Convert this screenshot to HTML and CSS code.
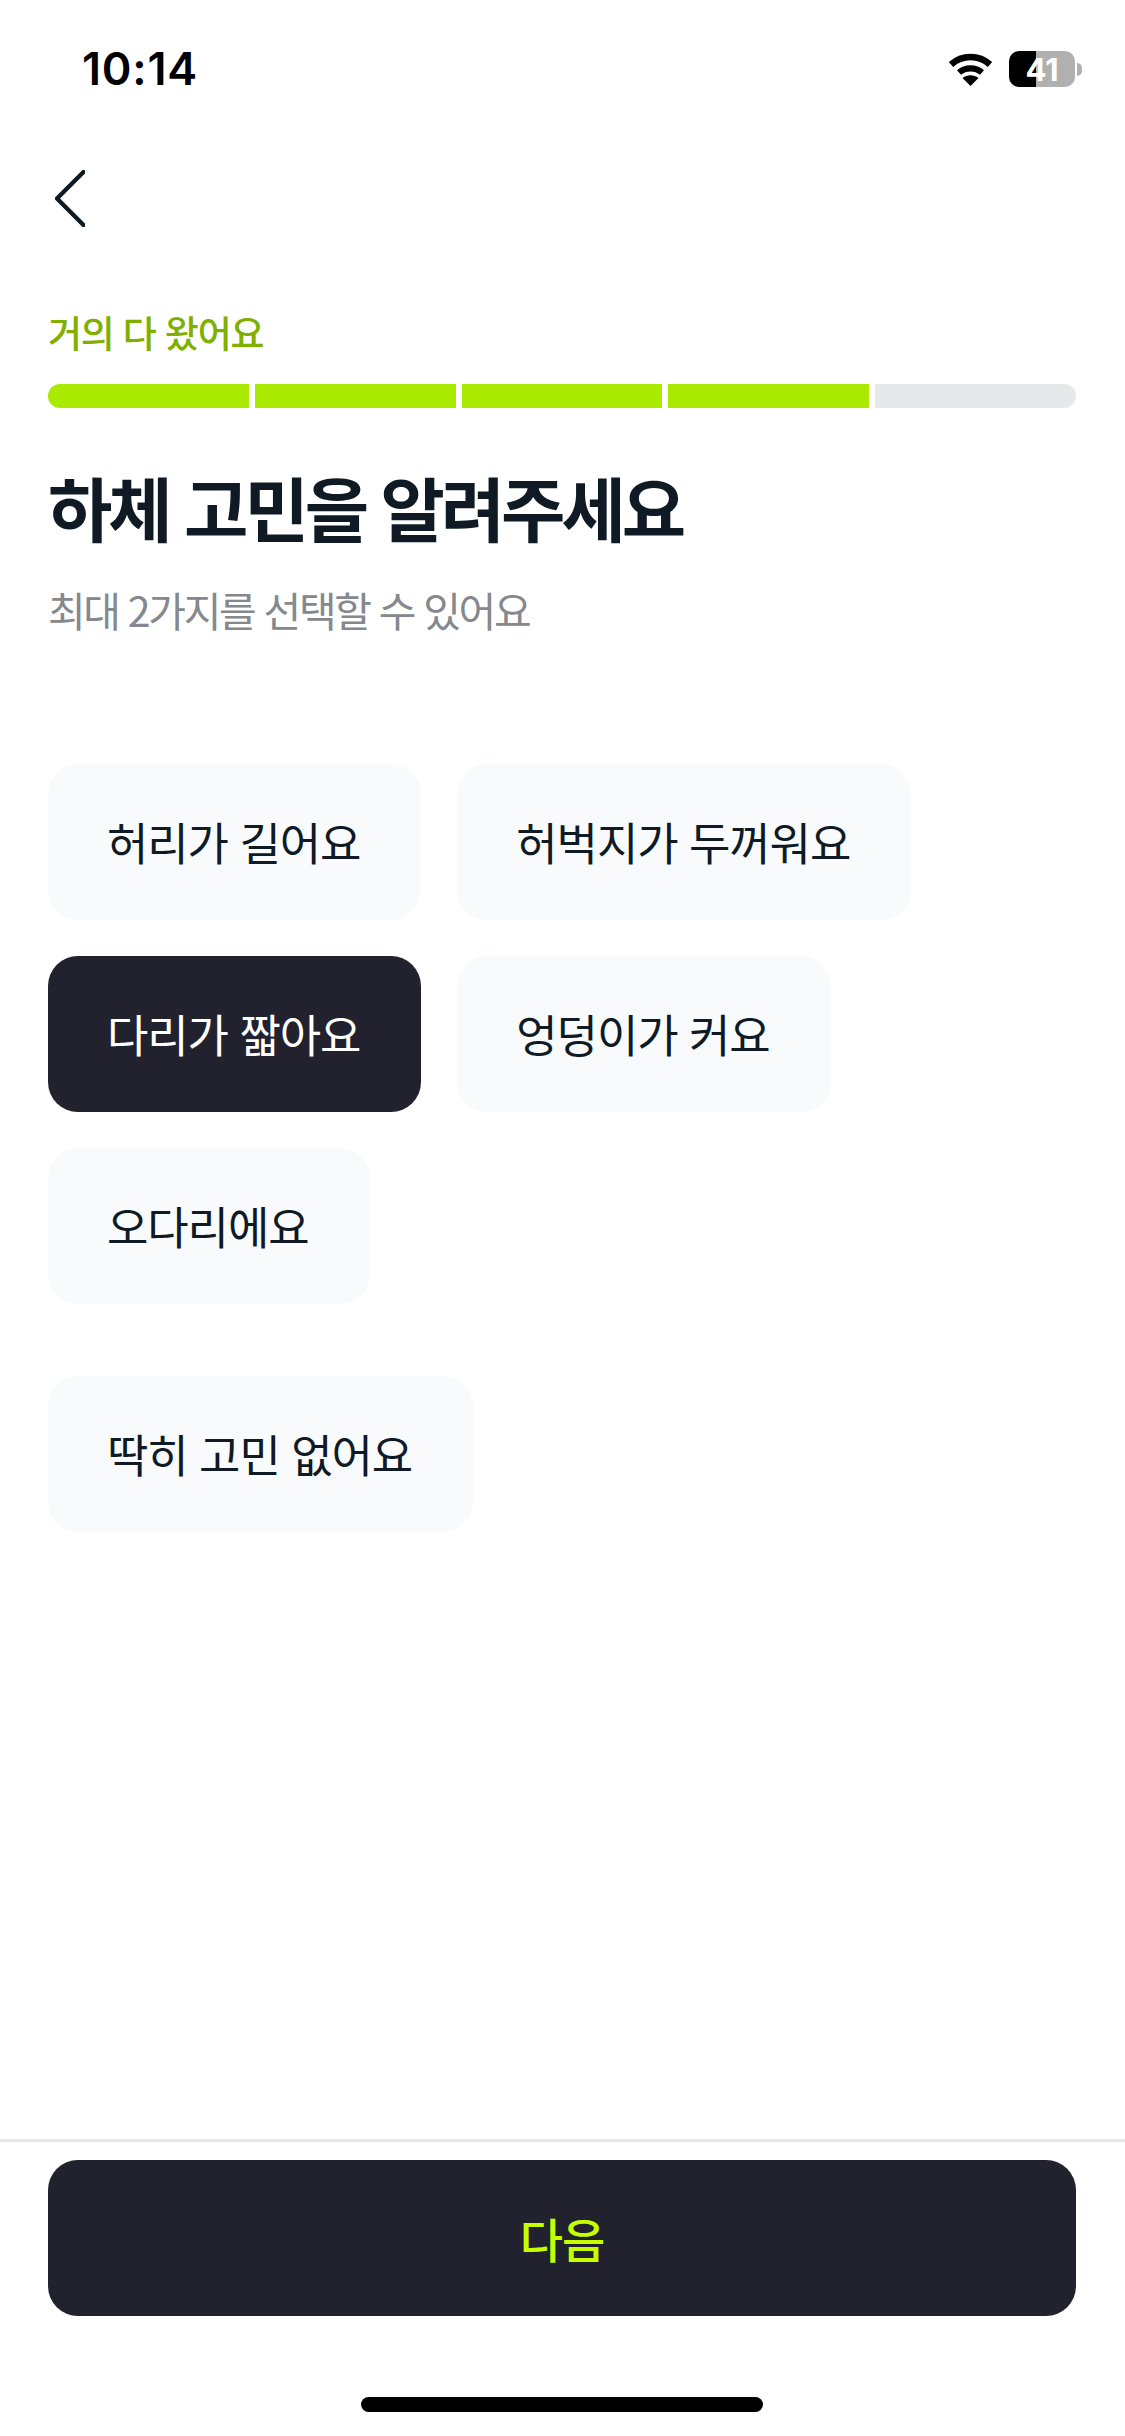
FILE: index.html
```html
<!DOCTYPE html>
<html lang="ko">
<head>
<meta charset="utf-8">
<title>하체 고민</title>
<link rel="stylesheet" href="styles.css">
</head>
<body>
<div class="screen">
  <header class="status">
    <span class="time">10:14</span>
    <div class="status-icons">
      <svg class="wifi" viewBox="0 0 45 33" width="45" height="33" aria-hidden="true">
        <path d="M3 11.5C14 1.5 31 1.5 42 11.5" fill="none" stroke="#000" stroke-width="6.6"/>
        <path d="M11 19.5C17.5 14 27.5 14 34 19.5" fill="none" stroke="#000" stroke-width="6.2"/>
        <path d="M22.5 33L14.5 25C19 21.2 26 21.2 30.5 25Z" fill="#000"/>
      </svg>
      <div class="battery-wrap">
        <div class="battery">41</div>
        <div class="battery-nub"></div>
      </div>
    </div>
  </header>
  <nav class="nav">
    <svg class="back" viewBox="0 0 30 57" width="30" height="57" aria-hidden="true">
      <path d="M28.5 2L2 28.5L28.5 55" fill="none" stroke="#0f1a24" stroke-width="4.4" stroke-linecap="round" stroke-linejoin="round"/>
    </svg>
  </nav>
  <main class="content">
    <p class="step">거의 다 왔어요</p>
    <div class="progress">
      <span class="seg on first"></span>
      <span class="seg on"></span>
      <span class="seg on"></span>
      <span class="seg on"></span>
      <span class="seg last"></span>
    </div>
    <h1 class="title">하체 고민을 알려주세요</h1>
    <p class="sub">최대 2가지를 선택할 수 있어요</p>
    <div class="chips">
      <button class="chip">허리가 길어요</button>
      <button class="chip">허벅지가 두꺼워요</button>
      <button class="chip selected">다리가 짧아요</button>
      <button class="chip">엉덩이가 커요</button>
      <button class="chip">오다리에요</button>
    </div>
    <div class="chips extra">
      <button class="chip">딱히 고민 없어요</button>
    </div>
  </main>
  <footer class="footer">
    <button class="next">다음</button>
    <div class="home"></div>
  </footer>
</div>
</body>
</html>
```
FILE: styles.css
```css
* { box-sizing: border-box; }
html, body { margin: 0; padding: 0; background: #fff; }
body { font-family: "Noto Sans CJK KR", "Noto Sans", sans-serif; color: #0f1a24; }
p, h1 { margin: 0; }
button { font-family: inherit; border: 0; }

.screen { width: 1125px; height: 2436px; display: flex; flex-direction: column; overflow: hidden; }

.status { height: 138px; padding: 51px 43px 0 82px; display: flex; justify-content: space-between; align-items: flex-start; }
.time { font-family: Inter, "Liberation Sans", sans-serif; font-weight: 600; font-size: 45px; line-height: 36px; letter-spacing: 0.8px; color: #000; }
.status-icons { display: flex; align-items: center; gap: 16px; }
.wifi { display: block; }
.battery-wrap { display: flex; align-items: center; gap: 2px; }
.battery { width: 66px; height: 36px; border-radius: 10px; display: flex; align-items: center; justify-content: center; font-family: Inter, "Liberation Sans", sans-serif; font-weight: 700; font-size: 31px; color: #fff; background: linear-gradient(90deg, #000 0 27px, #b0b0b0 27px 100%); }
.battery-nub { width: 5px; height: 13px; border-radius: 0 6px 6px 0; background: #b0b0b0; }

.nav { height: 170px; padding: 32px 0 0 55px; }
.back { display: block; }

.content { flex: 1; padding: 0 49px 0 48px; }
.step { font-size: 37px; font-weight: 500; line-height: 48px; letter-spacing: -1.2px; color: #7fb000; }
.progress { margin-top: 28px; height: 24px; display: flex; gap: 6px; }
.seg { flex: 1; background: #e6e8e9; }
.seg.on { background: #aaea00; }
.seg.first { border-radius: 12px 0 0 12px; }
.seg.last { border-radius: 0 12px 12px 0; }
.title { margin-top: 55px; font-size: 70px; font-weight: 700; line-height: 88px; letter-spacing: -4.1px; color: #0f1a24; }
.sub { margin-top: 30px; font-size: 41px; font-weight: 400; line-height: 56px; letter-spacing: -2.35px; color: #85888c; }

.chips { margin-top: 127px; display: flex; flex-wrap: wrap; gap: 36px; }
.chips.extra { margin-top: 72px; }
.chip { height: 156px; padding: 0 61px 2px 59px; border-radius: 30px; background: #f8fafc; color: #0f1a24; font-size: 45px; font-weight: 400; letter-spacing: -1.1px; white-space: nowrap; }
.chip.selected { background: #22222f; color: #fff; }

.footer { height: 297px; border-top: 3px solid #e6e8e9; padding: 18px 49px 0 48px; display: flex; flex-direction: column; align-items: center; }
.next { width: 100%; height: 156px; padding-bottom: 3px; border-radius: 30px; background: #21222e; color: #c6ff00; font-size: 47px; font-weight: 500; letter-spacing: -1px; }
.home { margin-top: 81px; width: 402px; height: 15px; border-radius: 8px; background: #000; }
```
